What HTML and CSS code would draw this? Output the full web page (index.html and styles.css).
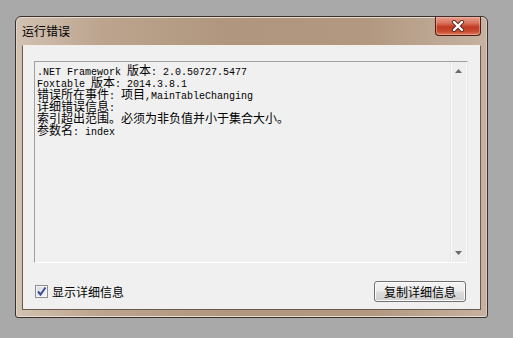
FILE: index.html
```html
<!DOCTYPE html>
<html>
<head>
<meta charset="utf-8">
<link rel="stylesheet" href="styles.css">
</head>
<body>
<div class="window">
  <div class="titlebar">
    <div class="title">运行错误</div>
    <div class="close">
      <svg width="16" height="12" viewBox="0 0 16 12">
        <path d="M4 2 L12 10 M12 2 L4 10" stroke="#5a2a20" stroke-width="4.2" stroke-linecap="round"/>
        <path d="M4 2 L12 10 M12 2 L4 10" stroke="#ffffff" stroke-width="2.4" stroke-linecap="round"/>
      </svg>
    </div>
  </div>
  <div class="client">
    <div class="textbox">
      <div class="text">
        <div class="line">.NET Framework <span class="cj">版本</span>: 2.0.50727.5477</div>
        <div class="line">Foxtable <span class="cj">版本</span>: 2014.3.8.1</div>
        <div class="line"><span class="cj">错误所在事件</span>: <span class="cj">项目</span>,MainTableChanging</div>
        <div class="line"><span class="cj">详细错误信息</span>:</div>
        <div class="line"><span class="cj">索引超出范围。必须为非负值并小于集合大小。</span></div>
        <div class="line"><span class="cj">参数名</span>: index</div>
      </div>
      <div class="scrollbar">
        <svg class="arrow" width="7" height="4" viewBox="0 0 7 4"><path d="M0 4 L3.5 0 L7 4 Z" fill="#6a6a6a"/></svg>
        <svg class="arrow" width="7" height="4" viewBox="0 0 7 4"><path d="M0 0 L3.5 4 L7 0 Z" fill="#6a6a6a"/></svg>
      </div>
    </div>
    <div class="bottom">
      <label class="check">
        <span class="box">
          <svg width="11" height="11" viewBox="0 0 11 11"><path d="M2 5.5 L4.5 8.5 L9.5 1.5" stroke="#3d4f8f" stroke-width="2" fill="none"/></svg>
        </span>
        <span class="label">显示详细信息</span>
      </label>
      <div class="button">复制详细信息</div>
    </div>
  </div>
</div>
</body>
</html>
```

FILE: styles.css
```css
html, body {
  margin: 0;
  padding: 0;
}
body {
  background: #a9a9a9;
  width: 513px;
  height: 338px;
  overflow: hidden;
  font-family: "Noto Sans CJK SC", "Liberation Sans", sans-serif;
  font-size: 12px;
  color: #000;
}
.window {
  margin: 16px 0 0 15px;
  width: 471px;
  height: 300px;
  border: 1px solid #3b302a;
  border-radius: 6px 6px 3px 3px;
  background: linear-gradient(90deg, #d2c2b2 0%, #bca48e 18%, #b0967e 45%, #b29880 75%, #c6b2a0 100%);
  box-shadow: inset 0 1px 0 #e6dcd2, inset 1px 0 0 #e0d4c8, inset -1px 0 0 #d8cabc, inset 0 -1px 0 #e8ded4;
  display: flex;
  flex-direction: column;
}
.titlebar {
  height: 28px;
  display: flex;
  justify-content: space-between;
  align-items: flex-start;
}
.title {
  padding: 6px 0 0 6px;
  line-height: 16px;
  font-size: 12px;
  color: #000;
}
.close {
  margin-right: 6px;
  width: 44px;
  height: 18px;
  border: 1px solid #4a1e16;
  border-top: none;
  border-radius: 0 0 4px 4px;
  background: linear-gradient(180deg, #e8a090 0%, #d8705a 35%, #c03a22 55%, #c84a30 80%, #e08060 100%);
  box-shadow: inset 0 0 0 1px rgba(255, 200, 180, 0.45);
  display: flex;
  align-items: center;
  justify-content: center;
}
.client {
  margin: 0 6px;
  width: 457px;
  height: 263px;
  background: #f0f0f0;
  border: 1px solid #6a5a4c;
  border-top-color: #f4eee8;
  display: flex;
  flex-direction: column;
}
.textbox {
  margin: 15px 0 0 11px;
  width: 432px;
  height: 200px;
  border: 1px solid #a0a0a0;
  border-right-color: #e8e8e8;
  border-bottom-color: #ffffff;
  background: #f0f0f0;
  display: flex;
}
.text {
  flex: 1;
  padding: 2px 0 0 2px;
  font-family: "Liberation Mono", "Noto Sans CJK SC", monospace;
  font-size: 10px;
  color: #000;
}
.line {
  height: 12px;
  line-height: 12px;
  white-space: pre;
}
.cj {
  font-family: "Noto Sans CJK SC", sans-serif;
  font-size: 12px;
  line-height: 12px;
}
.scrollbar {
  width: 15px;
  border-left: 1px solid #e6e6e6;
  border-right: 1px solid #fafafa;
  box-shadow: inset 1px 0 0 #fbfbfb;
  background: #eeeeee;
  display: flex;
  flex-direction: column;
  justify-content: space-between;
  align-items: center;
  padding: 7px 0 7px;
}
.arrow {
  display: block;
}
.bottom {
  margin: 18px 14px 0 12px;
  display: flex;
  justify-content: space-between;
  align-items: flex-start;
}
.check {
  display: flex;
  align-items: center;
  margin-top: 4px;
}
.box {
  width: 11px;
  height: 11px;
  border: 1px solid #8e8f8f;
  background: linear-gradient(135deg, #d8dbe2 0%, #f4f5f7 100%);
  box-shadow: inset 0 0 0 1px #f6f6f6;
  display: flex;
  align-items: center;
  justify-content: center;
}
.label {
  margin-left: 4px;
  font-size: 12px;
  line-height: 13px;
}
.button {
  width: 90px;
  height: 19px;
  border: 1px solid #707070;
  border-radius: 3px;
  background: linear-gradient(180deg, #f4f4f4 0%, #ebebeb 48%, #dddddd 52%, #cfcfcf 100%);
  box-shadow: inset 0 0 0 1px #fbfbfb;
  font-size: 12px;
  line-height: 19px;
  text-align: center;
}
```
